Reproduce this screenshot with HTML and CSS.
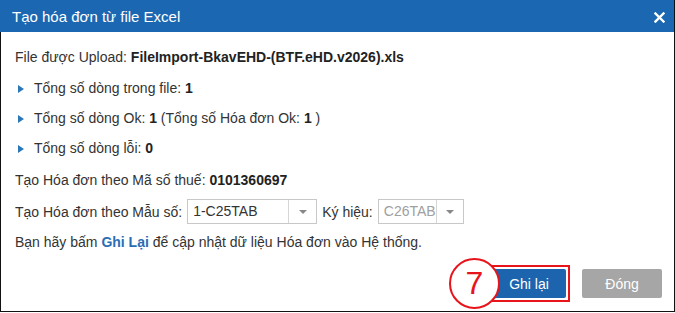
FILE: index.html
```html
<!DOCTYPE html>
<html lang="vi">
<head>
    <meta charset="UTF-8">
    <title>Tạo hóa đơn từ file Excel</title>
    <link rel="stylesheet" href="styles.css">
</head>
<body>
    <!-- Import dialog -->
    <div class="dialog">
        <div class="dialog-header">
            <span class="dialog-title">Tạo hóa đơn từ file Excel</span>
            <svg class="close-btn" width="11" height="11" viewBox="0 0 11 11">
                <path d="M1.5 1.5 L9.5 9.5 M9.5 1.5 L1.5 9.5" stroke="#fff" stroke-width="2.4" stroke-linecap="square"/>
            </svg>
        </div>

        <div class="dialog-body">
            <p class="line upload">File được Upload: <b>FileImport-BkavEHD-(BTF.eHD.v2026).xls</b></p>
            <p class="line stat"><span class="arrow"></span>Tổng số dòng trong file: <b>1</b></p>
            <p class="line stat"><span class="arrow"></span>Tổng số dòng Ok: <b>1</b> (Tổng số Hóa đơn Ok: <b>1</b> )</p>
            <p class="line stat last"><span class="arrow"></span>Tổng số dòng lỗi: <b>0</b></p>
            <p class="line tax">Tạo Hóa đơn theo Mã số thuế: <b>0101360697</b></p>

            <div class="select-row">
                <span>Tạo Hóa đơn theo Mẫu số:</span>
                <div class="combo combo-form">
                    <span class="combo-value">1-C25TAB</span>
                    <span class="combo-arrow"></span>
                </div>
                <span>Ký hiệu:</span>
                <div class="combo combo-symbol disabled">
                    <span class="combo-value">C26TAB</span>
                    <span class="combo-arrow"></span>
                </div>
            </div>

            <p class="line hint">Bạn hãy bấm <b class="link">Ghi Lại</b> để cập nhật dữ liệu Hóa đơn vào Hệ thống.</p>
        </div>

        <div class="dialog-footer">
            <div class="highlight">
                <span class="step">7</span>
                <button class="btn btn-save">Ghi lại</button>
            </div>
            <button class="btn btn-close">Đóng</button>
        </div>
    </div>
</body>
</html>
```

FILE: styles.css
```css
/* Base */
body {
    margin: 0;
    font-family: "Liberation Sans", Arial, sans-serif;
    font-size: 14px;
    color: #333;
    background: #fff;
}

/* Dialog frame */
.dialog {
    width: 675px;
    height: 312px;
    box-sizing: border-box;
    border-right: 1px solid #111;
    border-bottom: 1px solid #111;
    display: flex;
    flex-direction: column;
}

.dialog-header {
    height: 32px;
    background-color: #1b67b1;
    color: #fff;
    display: flex;
    align-items: center;
    justify-content: space-between;
    padding: 0 9px 0 12px;
}

.dialog-title {
    font-size: 15px;
}

.close-btn {
    display: block;
    margin-top: 2px;
}

.dialog-body {
    flex: 1;
    border-left: 1px solid #111;
    padding: 17px 0 0 14px;
    display: flex;
    flex-direction: column;
}

.line {
    margin: 0;
    line-height: 16px;
    white-space: nowrap;
}

.line b {
    color: #222;
}

.upload { margin-bottom: 15px; }
.stat { margin-bottom: 14px; padding-left: 3px; }
.stat.last { margin-bottom: 16px; }
.tax { margin-bottom: 11px; }

.arrow {
    display: inline-block;
    width: 0;
    height: 0;
    border-top: 4px solid transparent;
    border-bottom: 4px solid transparent;
    border-left: 6px solid #2b78b8;
    margin-right: 10px;
    vertical-align: 0;
}

/* Combo boxes */
.select-row {
    display: flex;
    align-items: center;
    gap: 5px;
    margin-bottom: 10px;
}

.combo {
    height: 25px;
    box-sizing: border-box;
    border: 1px solid #c8c8c8;
    display: flex;
    background: #fff;
}

.combo-form { width: 130px; }
.combo-symbol { width: 86px; }

.combo-value {
    flex: 1;
    padding-left: 5px;
    line-height: 23px;
}

.combo.disabled .combo-value {
    color: #a0a0a0;
}

.combo-arrow {
    width: 26px;
    border-left: 1px solid #d6d6d6;
    display: flex;
    align-items: center;
    justify-content: center;
}

.combo-form .combo-arrow { width: 27px; }

.combo-arrow::after {
    content: "";
    border-left: 4px solid transparent;
    border-right: 4px solid transparent;
    border-top: 4px solid #888;
}

.link {
    color: #2a6db5 !important;
}

/* Footer buttons */
.dialog-footer {
    border-left: 1px solid #111;
    display: flex;
    justify-content: flex-end;
    align-items: center;
    gap: 12px;
    padding: 0 12px 9px 0;
}

.highlight {
    position: relative;
    border: 2px solid #e8141b;
    padding: 2px;
}

.step {
    position: absolute;
    left: -41px;
    top: -9px;
    width: 47px;
    height: 47px;
    border: 2px solid #e8141b;
    border-radius: 50%;
    background: #fff;
    color: #e8141b;
    font-size: 32px;
    line-height: 47px;
    text-align: center;
}

.btn {
    height: 29px;
    border: none;
    border-radius: 2px;
    font-family: "Liberation Sans", Arial, sans-serif;
    font-size: 14px;
    color: #fff;
    padding: 0;
}

.btn-save {
    width: 74px;
    background-color: #1c64ae;
    display: block;
}

.btn-close {
    width: 80px;
    background-color: #a6a6a6;
}
```
